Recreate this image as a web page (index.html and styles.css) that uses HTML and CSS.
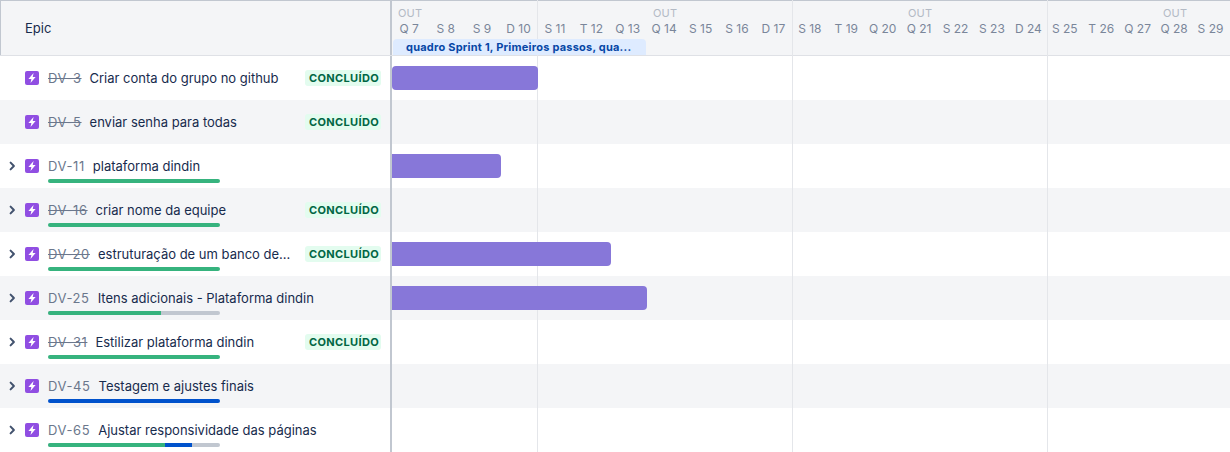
FILE: index.html
```html
<!DOCTYPE html>
<html lang="pt">
<head>
<meta charset="utf-8">
<title>Linha do tempo</title>
<link rel="stylesheet" href="styles.css">
</head>
<body>
<svg class="defs" width="0" height="0" aria-hidden="true">
  <symbol id="epic" viewBox="0 0 14 14"><rect width="14" height="14" rx="2" fill="#904ee2"/><path d="M8.6 2 3.4 8.1h3l-.9 3.9L10.6 5.9H7.7z" fill="#fff"/></symbol>
  <symbol id="chev" viewBox="0 0 8 10"><path d="M2.6 1.6 5.9 5 2.6 8.4" fill="none" stroke="#42526e" stroke-width="2" stroke-linecap="round" stroke-linejoin="round"/></symbol>
</svg>
<main class="roadmap">
  <div class="grid-lines"><span></span><span></span><span></span></div>
  <header class="head">
    <div class="head-epic">Epic</div>
    <div class="head-time">
      <div class="months"><span>OUT</span><span>OUT</span><span>OUT</span><span>OUT</span></div>
      <div class="days"><span>Q 7</span><span>S 8</span><span>S 9</span><span>D 10</span><span>S 11</span><span>T 12</span><span>Q 13</span><span>Q 14</span><span>S 15</span><span>S 16</span><span>D 17</span><span>S 18</span><span>T 19</span><span>Q 20</span><span>Q 21</span><span>S 22</span><span>S 23</span><span>D 24</span><span>S 25</span><span>T 26</span><span>Q 27</span><span>Q 28</span><span>S 29</span></div>
      <div class="sprint">quadro Sprint 1, Primeiros passos, qua...</div>
    </div>
  </header>
  <div class="rows">
    <div class="row">
      <div class="cell"><svg class="ico"><use href="#epic"/></svg><div class="line"><span class="key done">DV-3</span><span class="sum">Criar conta do grupo no github</span><span class="loz">CONCLUÍDO</span></div></div>
      <div class="track"><div class="bar whole" style="width:146px"></div></div>
    </div>
    <div class="row">
      <div class="cell"><svg class="ico"><use href="#epic"/></svg><div class="line"><span class="key done">DV-5</span><span class="sum">enviar senha para todas</span><span class="loz">CONCLUÍDO</span></div></div>
      <div class="track"></div>
    </div>
    <div class="row">
      <div class="cell"><svg class="chev"><use href="#chev"/></svg><svg class="ico"><use href="#epic"/></svg><div class="line"><span class="key">DV-11</span><span class="sum">plataforma dindin</span></div><div class="prog"><i class="green" style="width:100%"></i></div></div>
      <div class="track"><div class="bar" style="width:109px"></div></div>
    </div>
    <div class="row">
      <div class="cell"><svg class="chev"><use href="#chev"/></svg><svg class="ico"><use href="#epic"/></svg><div class="line"><span class="key done">DV-16</span><span class="sum">criar nome da equipe</span><span class="loz">CONCLUÍDO</span></div><div class="prog"><i class="green" style="width:100%"></i></div></div>
      <div class="track"></div>
    </div>
    <div class="row">
      <div class="cell"><svg class="chev"><use href="#chev"/></svg><svg class="ico"><use href="#epic"/></svg><div class="line"><span class="key done">DV-20</span><span class="sum">estruturação de um banco de...</span><span class="loz">CONCLUÍDO</span></div><div class="prog"><i class="green" style="width:100%"></i></div></div>
      <div class="track"><div class="bar" style="width:218.5px"></div></div>
    </div>
    <div class="row">
      <div class="cell"><svg class="chev"><use href="#chev"/></svg><svg class="ico"><use href="#epic"/></svg><div class="line"><span class="key">DV-25</span><span class="sum">Itens adicionais - Plataforma dindin</span></div><div class="prog"><i class="green" style="width:65.5%"></i></div></div>
      <div class="track"><div class="bar" style="width:255px"></div></div>
    </div>
    <div class="row">
      <div class="cell"><svg class="chev"><use href="#chev"/></svg><svg class="ico"><use href="#epic"/></svg><div class="line"><span class="key done">DV-31</span><span class="sum">Estilizar plataforma dindin</span><span class="loz">CONCLUÍDO</span></div><div class="prog"><i class="green" style="width:100%"></i></div></div>
      <div class="track"></div>
    </div>
    <div class="row">
      <div class="cell"><svg class="chev"><use href="#chev"/></svg><svg class="ico"><use href="#epic"/></svg><div class="line"><span class="key">DV-45</span><span class="sum">Testagem e ajustes finais</span></div><div class="prog"><i class="blue" style="width:100%"></i></div></div>
      <div class="track"></div>
    </div>
    <div class="row">
      <div class="cell"><svg class="chev"><use href="#chev"/></svg><svg class="ico"><use href="#epic"/></svg><div class="line"><span class="key">DV-65</span><span class="sum">Ajustar responsividade das páginas</span></div><div class="prog"><i class="green" style="width:68%"></i><i class="blue" style="width:16%"></i></div></div>
      <div class="track"></div>
    </div>
  </div>
</main>
</body>
</html>
```
FILE: styles.css
```css
* { box-sizing: border-box; }
html, body { margin: 0; height: 100%; background: #fff; overflow: hidden; }
body { font-family: Inter, "Liberation Sans", sans-serif; color: #172b4d; font-size: 13px; }
.defs { position: absolute; }
.roadmap { position: relative; width: 1230px; height: 452px; overflow: hidden; }

.head { display: grid; grid-template-columns: 390px 840px; height: 56px; background: #f4f5f7; border-top: 1px solid #c1c7d0; border-bottom: 1px solid #dfe1e6; }
.head-epic { border-left: 1px solid #c1c7d0; border-right: 2px solid #c1c7d0; padding: 0 0 0 24px; width: 392px; display: flex; align-items: center; font-size: 13px; line-height: 16px; }
.head-time { position: relative; padding-left: 1px; overflow: hidden; z-index: 1; }
.months { display: flex; height: 14px; margin-top: 5px; }
.months span { flex: 0 0 255px; padding-left: 7px; font-size: 11px; line-height: 14px; color: #b3bac5; letter-spacing: .2px; }
.days { display: flex; height: 16px; margin-top: 1px; }
.days span { flex: 0 0 36.43px; text-align: center; font-size: 12px; line-height: 16px; color: #7a869a; white-space: nowrap; }
.sprint { position: absolute; left: 3px; top: 38px; width: 253px; height: 16px; background: #deebff; border-radius: 4px 4px 0 0; color: #0747a6; font-size: 11px; font-weight: 700; line-height: 16px; padding-left: 13px; letter-spacing: .22px; white-space: nowrap; overflow: hidden; }

.row { display: grid; grid-template-columns: 392px 1fr; height: 44px; }
.row:nth-child(even) { background: #f4f5f7; }
.cell { display: grid; grid-template-columns: 25px 23px 1fr; grid-template-rows: 12px 20px 3px 4px 5px; border-right: 2px solid #c1c7d0; padding-right: 9px; }
.chev { grid-column: 1; grid-row: 2; width: 8px; height: 10px; align-self: center; margin-left: 8px; }
.ico { grid-column: 2; grid-row: 2; width: 14px; height: 14px; align-self: center; }
.line { grid-column: 3; grid-row: 2; display: flex; align-items: center; min-width: 0; }
.key { color: #6b778c; margin-right: 8px; letter-spacing: .6px; white-space: nowrap; flex: none; }
.key.done { text-decoration: line-through; }
.sum { white-space: nowrap; min-width: 0; margin-right: 14px; }
.loz { flex: none; margin-left: auto; width: 76px; height: 16px; padding-left: 2px; background: #e3fcef; border-radius: 3px; text-align: center; font-size: 11px; font-weight: 700; line-height: 16px; color: #006644; letter-spacing: .35px; white-space: nowrap; }
.prog { grid-column: 3; grid-row: 4; width: 172px; height: 4px; border-radius: 2px; background: #c1c7d0; overflow: hidden; display: flex; }
.prog i { display: block; height: 4px; }
.green { background: #36b37e; }
.blue { background: #0052cc; }

.track { display: flex; align-items: center; }
.bar { position: relative; z-index: 1; height: 24px; background: #8777d9; border-radius: 0 4px 4px 0; }
.bar.whole { border-radius: 4px; }

.grid-lines { position: absolute; top: 0; bottom: 0; left: 537px; z-index: 1; display: flex; }
.grid-lines span { width: 255px; border-left: 1px solid #e4e6ea; }
```
